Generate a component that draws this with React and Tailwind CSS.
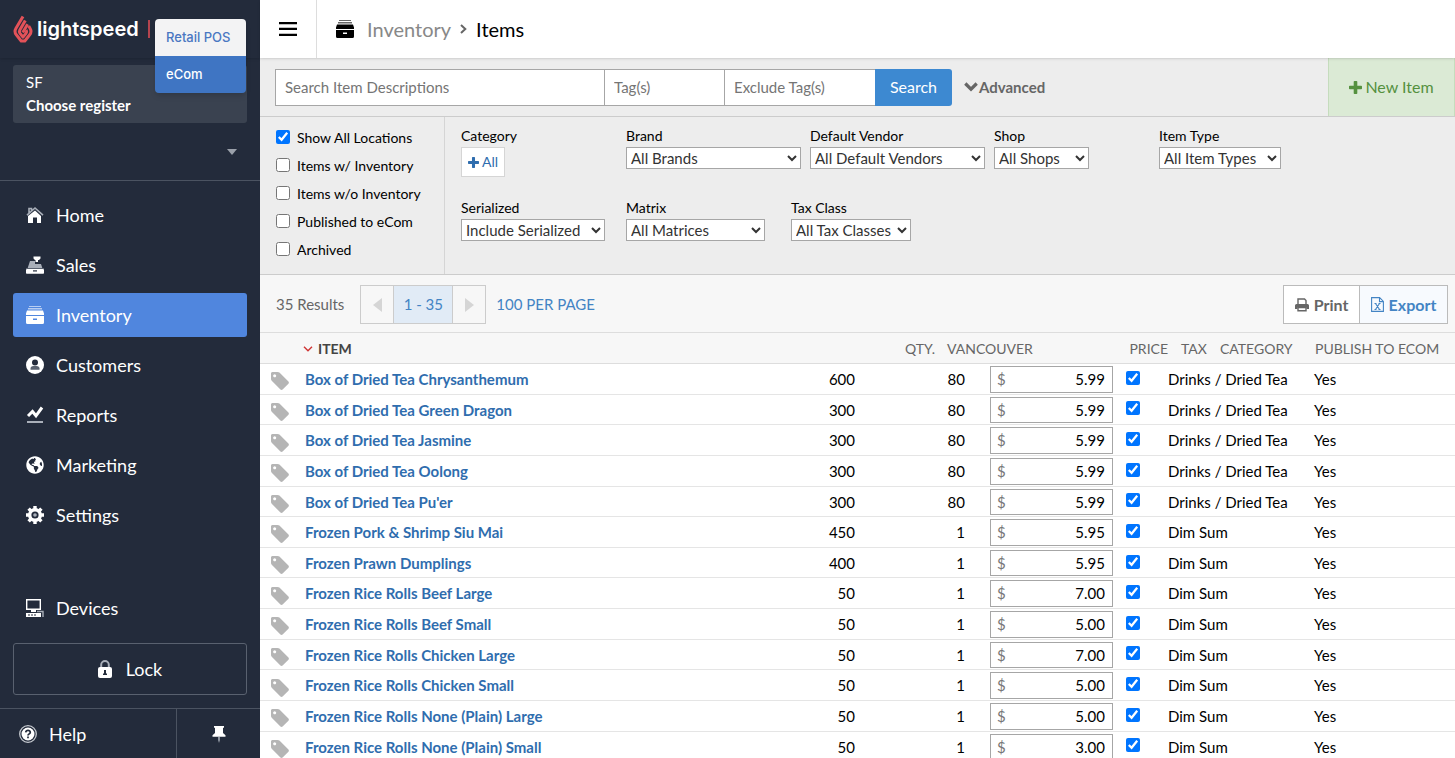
import { useId } from 'react';
import { FaGlobeAmericas } from 'react-icons/fa';

const ITEMS = [
  { name: 'Box of Dried Tea Chrysanthemum', qty: 600, local: 80, price: '5.99', category: 'Drinks / Dried Tea' },
  { name: 'Box of Dried Tea Green Dragon', qty: 300, local: 80, price: '5.99', category: 'Drinks / Dried Tea' },
  { name: 'Box of Dried Tea Jasmine', qty: 300, local: 80, price: '5.99', category: 'Drinks / Dried Tea' },
  { name: 'Box of Dried Tea Oolong', qty: 300, local: 80, price: '5.99', category: 'Drinks / Dried Tea' },
  { name: "Box of Dried Tea Pu'er", qty: 300, local: 80, price: '5.99', category: 'Drinks / Dried Tea' },
  { name: 'Frozen Pork & Shrimp Siu Mai', qty: 450, local: 1, price: '5.95', category: 'Dim Sum' },
  { name: 'Frozen Prawn Dumplings', qty: 400, local: 1, price: '5.95', category: 'Dim Sum' },
  { name: 'Frozen Rice Rolls Beef Large', qty: 50, local: 1, price: '7.00', category: 'Dim Sum' },
  { name: 'Frozen Rice Rolls Beef Small', qty: 50, local: 1, price: '5.00', category: 'Dim Sum' },
  { name: 'Frozen Rice Rolls Chicken Large', qty: 50, local: 1, price: '7.00', category: 'Dim Sum' },
  { name: 'Frozen Rice Rolls Chicken Small', qty: 50, local: 1, price: '5.00', category: 'Dim Sum' },
  { name: 'Frozen Rice Rolls None (Plain) Large', qty: 50, local: 1, price: '5.00', category: 'Dim Sum' },
  { name: 'Frozen Rice Rolls None (Plain) Small', qty: 50, local: 1, price: '3.00', category: 'Dim Sum' },
];

const CHECKS = [
  { label: 'Show All Locations', on: true },
  { label: 'Items w/ Inventory' },
  { label: 'Items w/o Inventory' },
  { label: 'Published to eCom' },
  { label: 'Archived' },
];

function Flame() {
  return (
    <svg viewBox="0 0 20 28" className="h-7 w-5" fill="none" stroke="#e35259" strokeWidth="3" strokeLinejoin="round">
      <path d="M10 1.500 3 13.300c-1.500 2.600-1.500 4.300.3 6.500L8.200 26h3.600l4.900-6.200c1.800-2.200 1.800-3.900.3-6.500L15.700 11" />
      <path d="M12.300 5.500 6.800 15c-.7 1.300-.7 2.200.2 3.400l3 3.700 3-3.700c.9-1.200.9-2.100.2-3.400" />
      <path d="m14.600 9.300-4.800 8.200" />
    </svg>
  );
}

function HomeIcon() {
  return (
    <svg viewBox="0 0 18 18" className="size-[18px]">
      <path d="M1 9.200 9 2l8 7.200M3 7V2.500h2.500V5" fill="none" stroke="#a9afb9" strokeWidth="1.600" />
      <path d="M9 4.500 15 10v7h-4v-5.500H7V17H2v-7z" fill="#fff" />
    </svg>
  );
}

function SalesIcon() {
  return (
    <svg viewBox="0 0 18 18" className="size-[18px]">
      <path d="M4 5h5v3h6l1.500 4.500h-15z" fill="#a9afb9" />
      <path d="M7.500 0.500h7v2l-1.500 1.500h-1V6h-2.500V4H9L7.500 2.500z" fill="#fff" />
      <path d="M1 12.500h16l1 1V17q0 .8-.8.8H.8Q0 17.800 0 17v-3.500z" fill="#fff" />
      <path d="M0 12h18v1H0z" fill="#59616f" />
      <path d="M7 14.300h4v1.200H7z" fill="#232b3b" />
    </svg>
  );
}

function DrawerIcon({ notch }) {
  return (
    <svg viewBox="0 0 18 18" className="size-[18px]" fill="currentColor">
      <path d="M3 0h12v1H3zM2 2h14v1.500H2z" opacity=".6" />
      <path d="M1 4.500h16l1 3V9H0V7.500zM0 10h18v6.500q0 1.500-1.500 1.500h-15Q0 18 0 16.500z" />
      <path d="M7 12.500h4V14H7z" fill={notch} />
    </svg>
  );
}

function CustomerIcon() {
  return (
    <svg viewBox="0 0 18 18" className="size-[18px]">
      <circle cx="9" cy="9" r="9" fill="#fff" />
      <circle cx="9" cy="6.500" r="3" fill="#232b3b" />
      <path d="M4.500 13.800v-1.300q0-2.500 3-2.500h3q3 0 3 2.500v1.300z" fill="#59616f" />
    </svg>
  );
}

function ReportIcon() {
  return (
    <svg viewBox="0 0 18 18" className="size-[18px]" fill="none">
      <path d="m2 10 4.500-4.500L10 9.800l6-8.300" stroke="#fff" strokeWidth="3" />
      <path d="M1 16h16" stroke="#a9afb9" strokeWidth="2" />
    </svg>
  );
}

function GearIcon() {
  return (
    <svg viewBox="0 0 18 18" className="size-[18px]" fill="none" stroke="#fff">
      <circle cx="9" cy="9" r="5.300" strokeWidth="3.400" />
      <path d="M9 0v3M9 15v3M0 9h3M15 9h3M2.600 2.600l2.200 2.200M13.200 13.200l2.200 2.200M15.400 2.600l-2.200 2.200M4.800 13.200l-2.200 2.200" strokeWidth="3.400" />
      <circle cx="9" cy="9" r="1.800" fill="#a9afb9" stroke="none" />
    </svg>
  );
}

function DeviceIcon() {
  return (
    <svg viewBox="0 0 18 18" className="size-[18px]" fill="none" stroke="#fff">
      <path d="M.700.700h13.600v9.600H.700z" strokeWidth="1.400" />
      <path d="M5 10h5v3H5z" fill="#fff" stroke="none" />
      <path d="M0 14h15v4H0z" fill="#fff" stroke="none" />
      <path d="M2 16h9" stroke="#232b3b" strokeDasharray="2 1" />
      <path d="M11 12.500h6V18" stroke="#a9afb9" strokeWidth="1.400" />
    </svg>
  );
}

function LockIcon() {
  return (
    <svg viewBox="0 0 14 18" className="h-[18px] w-[14px]">
      <path d="M3.200 8V4.800a3.800 3.800 0 0 1 7.600 0V8" fill="none" stroke="#a9afb9" strokeWidth="2" />
      <rect y="7" width="14" height="11" rx="2" fill="#fff" />
      <path d="M6 10h2v3.500h1V15H5v-1.500h1z" fill="#232b3b" />
    </svg>
  );
}

function HelpIcon() {
  return (
    <svg viewBox="0 0 18 18" className="size-[18px]" fill="none">
      <circle cx="9" cy="9" r="8.300" stroke="#c5c9cf" strokeWidth="1.300" />
      <circle cx="9" cy="9" r="6.500" fill="#fff" />
      <path d="M6.700 7.400Q7 5.300 9 5.300t2.300 1.900q0 1.200-1.300 1.800-1 .4-1 1.500M9 11.600v1.700" stroke="#232b3b" strokeWidth="1.700" />
    </svg>
  );
}

function PinIcon() {
  return (
    <svg viewBox="0 0 14 18" className="h-[18px] w-[14px]">
      <path d="M2 1h10v1.800h-1V8l2.500 2.200v1.600H.500v-1.600L3 8V2.800H2z" fill="#fff" />
      <path d="M6.200 12h1.600v3L7 18l-.8-3z" fill="#a9afb9" />
    </svg>
  );
}

function PlusIcon({ size }) {
  return (
    <svg viewBox="0 0 13 13" width={size} height={size} fill="currentColor">
      <path d="M5.500 0h2q.8 0 .8.800v3.900h3.900q.8 0 .8.800v2q0 .8-.8.800H8.300v3.900q0 .8-.8.800h-2q-.8 0-.8-.8V8.300H.8Q0 8.300 0 7.500v-2q0-.8.800-.8h3.900V.800q0-.8.800-.8z" />
    </svg>
  );
}

function TagIcon() {
  return (
    <svg viewBox="150 128 1493 1515" className="size-[18px]" fill="#b5b5b5">
      <path d="M576 448q0-53-37.500-90.500t-90.500-37.500-90.500 37.500-37.500 90.500 37.500 90.500 90.500 37.500 90.500-37.500 37.500-90.500zm1067 576q0 53-37 90l-491 492q-39 37-91 37-53 0-90-37l-715-716q-38-37-64.500-101t-26.500-117v-416q0-52 38-90t90-38h416q53 0 117 26.500t102 64.500l715 714q37 39 37 91z" />
    </svg>
  );
}

function PrintIcon() {
  return (
    <svg viewBox="0 0 14 14" className="size-[14px]" fill="none" stroke="currentColor">
      <path d="M3 6V1h6.500L11 2.500V6" strokeWidth="1.400" />
      <path d="M0 11V7.500Q0 6 1.500 6h11Q14 6 14 7.500V11h-2.500V9.500h-9V11z" fill="currentColor" stroke="none" />
      <path d="M3 9.500h8v3.300H3z" strokeWidth="1.400" />
    </svg>
  );
}

function SheetIcon() {
  return (
    <svg viewBox="0 0 13 15" className="h-[15px] w-[13px]" fill="none" stroke="currentColor" strokeWidth="1.100">
      <path d="M.6.600h8l3.800 3.800v10H.600zM8.500.600v4h3.900" />
      <path d="m4.500 6.500 4 6M8.500 6.500l-4 6M3.500 6.500h2M7.500 6.500h2M3.500 12.500h2M7.500 12.500h2" />
    </svg>
  );
}

const NAV = [
  { label: 'Home', icon: <HomeIcon /> },
  { label: 'Sales', icon: <SalesIcon /> },
  { label: 'Inventory', icon: <DrawerIcon notch="#5086de" />, active: true },
  { label: 'Customers', icon: <CustomerIcon /> },
  { label: 'Reports', icon: <ReportIcon /> },
  { label: 'Marketing', icon: <FaGlobeAmericas size={18} /> },
  { label: 'Settings', icon: <GearIcon /> },
];

function NavLink({ label, icon, active }) {
  return (
    <a
      href="#"
      className={`flex h-11 items-center gap-3 rounded-[3px] px-[13px] text-lg text-white ${active ? 'bg-[#5086de]' : ''}`}
    >
      {icon}
      {label}
    </a>
  );
}

function Sidebar() {
  return (
    <aside className="flex w-[260px] shrink-0 flex-col bg-[#232b3b] text-white">
      <div className="relative flex h-[58px] shrink-0 items-center px-[13px] shadow">
        <Flame />
        <span className="ml-1 font-['Inter'] text-xl font-semibold">lightspeed</span>
        <span className="ml-[9px] h-[18px] w-0.5 bg-[#b5444e]" />
        <div className="absolute top-[19px] left-[155px] z-10 flex w-[91px] flex-col overflow-hidden rounded font-['Inter'] text-[13px] font-medium shadow-md">
          <a href="#" className="flex h-[37px] items-center bg-[#f3f3f4] px-[11px] text-[#4a77c2]">Retail POS</a>
          <a href="#" className="flex h-[37px] items-center bg-[#3f75c3] px-[11px] text-white">eCom</a>
        </div>
      </div>

      <button className="mx-[13px] mt-[7px] h-[58px] rounded-[3px] bg-[#3a4250] px-[13px] text-left text-[15px] leading-[23px]">
        <span className="block">SF</span>
        <span className="block font-bold">Choose register</span>
      </button>
      <div className="flex h-[58px] shrink-0 items-center justify-end border-b border-[#4b5361] px-[23px]">
        <svg viewBox="0 0 10 6" className="h-1.5 w-2.5" fill="#9aa0aa"><path d="M0 0h10L5 6z" /></svg>
      </div>

      <nav className="mx-[13px] mt-3 flex flex-col gap-[6px]">
        {NAV.map(n => <NavLink key={n.label} {...n} />)}
      </nav>

      <div className="mx-[13px] mt-auto mb-[13px] flex flex-col gap-[13px]">
        <NavLink label="Devices" icon={<DeviceIcon />} />
        <button className="flex h-[52px] items-center justify-center gap-[14px] rounded-[3px] border border-[#59616f] text-lg">
          <LockIcon />
          Lock
        </button>
      </div>
      <div className="flex h-[50px] shrink-0 border-t border-[#4b5361] text-lg">
        <a href="#" className="flex flex-1 items-center gap-3 border-r border-[#4b5361] px-[19px]">
          <HelpIcon />
          Help
        </a>
        <button aria-label="Pin menu" className="flex w-[83px] items-center justify-center"><PinIcon /></button>
      </div>
    </aside>
  );
}

function SelectField({ label, value, width }) {
  const id = useId();
  return (
    <div className="min-w-[165px] pr-[9px]">
      <label htmlFor={id} className="block text-sm leading-[22px] text-black">{label}</label>
      <select id={id} className={`block h-[22px] border border-[#a6a6a6] bg-white text-[15px] leading-5 text-[#333] ${width}`}>
        <option>{value}</option>
      </select>
    </div>
  );
}

function Filters() {
  return (
    <section className="flex border-b border-[#ccc] bg-[#ededed]">
      <div className="flex w-[185px] shrink-0 flex-col border-r border-[#d5d5d5] px-4 pt-[7px] pb-[10px]">
        {CHECKS.map(c => (
          <label key={c.label} className="flex h-7 items-center gap-[7px] text-sm whitespace-nowrap text-black">
            <input type="checkbox" defaultChecked={c.on} className="mb-[3px] size-[14px]" />
            {c.label}
          </label>
        ))}
      </div>
      <div className="flex flex-1 flex-wrap content-start gap-y-5 pt-2 pl-4">
        <div className="min-w-[165px]">
          <p className="text-sm leading-[22px] text-black">Category</p>
          <button className="flex h-[30px] items-center gap-[3px] border border-[#d5d5d5] bg-white px-[6px] text-sm text-[#2f6dae]">
            <PlusIcon size={11} />
            All
          </button>
        </div>
        <SelectField label="Brand" value="All Brands" width="w-[175px]" />
        <SelectField label="Default Vendor" value="All Default Vendors" width="w-[175px]" />
        <SelectField label="Shop" value="All Shops" width="w-[95px]" />
        <SelectField label="Item Type" value="All Item Types" width="w-[122px]" />
        <SelectField label="Serialized" value="Include Serialized" width="w-[144px]" />
        <SelectField label="Matrix" value="All Matrices" width="w-[139px]" />
        <SelectField label="Tax Class" value="All Tax Classes" width="w-[120px]" />
      </div>
    </section>
  );
}

function SearchBar() {
  const input = 'h-[37px] border border-[#a6a6a6] bg-white px-[9px] text-[15px] text-[#333] placeholder:text-[#757575]';
  return (
    <form className="flex h-[59px] shrink-0 items-center border-b border-[#ccc] bg-[#ededed] pl-[15px]">
      <input aria-label="Search Item Descriptions" placeholder="Search Item Descriptions" className={`w-[330px] ${input}`} />
      <input aria-label="Tags" placeholder="Tag(s)" className={`w-[120px] border-l-0 ${input}`} />
      <input aria-label="Exclude tags" placeholder="Exclude Tag(s)" className={`w-[150px] border-x-0 ${input}`} />
      <button type="button" className="h-[37px] w-[77px] rounded-r-[3px] bg-[#3d89d1] text-base text-white">Search</button>
      <button type="button" className="ml-3 flex items-center gap-px text-[15px] font-bold text-[#666]">
        <svg viewBox="0 0 14 10" className="h-2.5 w-3.5" fill="none" stroke="currentColor" strokeWidth="3.200"><path d="m1.300 1.500 5.700 5.700 5.700-5.700" /></svg>
        Advanced
      </button>
      <button type="button" className="ml-auto flex h-full w-[127px] items-center justify-center gap-[3px] border-x border-[#c5dcbd] bg-[#dbead5] text-base text-[#55913f]">
        <PlusIcon size={13} />
        New Item
      </button>
    </form>
  );
}

function ResultsBar() {
  return (
    <div className="flex h-[57px] shrink-0 items-center bg-[#f7f7f7] pt-0.5 pr-[7px] pl-4 text-[15px]">
      <span className="text-[#666]">35 Results</span>
      <div className="ml-4 flex h-[39px] border border-[#ccc]">
        <button aria-label="Previous page" className="flex w-8 items-center justify-center">
          <svg viewBox="0 0 9 14" className="h-3.5 w-[9px]" fill="#d5d5d5"><path d="M9 0v14L0 7z" /></svg>
        </button>
        <button className="w-[60px] border-x border-[#ccc] bg-[#e1ebf6] text-[#4384c4]">1 - 35</button>
        <button aria-label="Next page" className="flex w-8 items-center justify-center">
          <svg viewBox="0 0 9 14" className="h-3.5 w-[9px]" fill="#d5d5d5"><path d="M0 0v14l9-7z" /></svg>
        </button>
      </div>
      <a href="#" className="ml-[10px] text-[#4384c4]">100 PER PAGE</a>
      <div className="ml-auto flex h-[39px] border border-[#bbb] text-base font-bold">
        <button className="flex w-[75px] items-center justify-center gap-[5px] bg-white text-[#666]"><PrintIcon />Print</button>
        <button className="flex w-[88px] items-center justify-center gap-[5px] border-l border-[#bbb] bg-[#f7fafe] text-[#4384c4]">
          <SheetIcon />
          Export
        </button>
      </div>
    </div>
  );
}

function ItemTable() {
  return (
    <table className="block text-[15px] text-black">
      <thead className="block">
        <tr className="grid h-8 grid-cols-[1fr_60px_100px_134px_39px_95px_140px] items-center border-y border-[#ddd] bg-[#f7f7f7] pt-px text-sm text-[#666] *:font-normal">
          <th className="pl-[43px] text-left">
            <button className="flex items-center gap-[5px] font-bold text-[#444]">
              <svg viewBox="0 0 10 6" className="h-1.5 w-2.5" fill="none" stroke="#cf3434" strokeWidth="1.400"><path d="m1 .700 4 4 4-4" /></svg>
              ITEM
            </button>
          </th>
          <th className="pr-3 text-right">QTY.</th>
          <th className="text-left">VANCOUVER</th>
          <th className="pr-[13px] text-right">PRICE</th>
          <th className="text-left">TAX</th>
          <th className="text-left">CATEGORY</th>
          <th className="text-left">PUBLISH TO ECOM</th>
        </tr>
      </thead>
      <tbody className="block">
        {ITEMS.map(item => (
          <tr key={item.name} className="grid grid-cols-[45px_1fr_100px_110px_136px_42px_146px_141px] items-center border-b border-[#e5e5e5] pt-px leading-snug">
            <td className="pt-1 pl-[11px]"><TagIcon /></td>
            <td><a href="#" className="font-bold text-[#2f6dae]">{item.name}</a></td>
            <td className="pr-[25px] text-right">{item.qty}</td>
            <td className="pr-[25px] text-right">{item.local}</td>
            <td className="py-px">
              <label className="flex w-[123px] items-center border border-[#a6a6a6] bg-white py-[2px] pr-[7px] pl-[6px]">
                <span className="text-[#777]">$</span>
                <input aria-label={`Price of ${item.name}`} defaultValue={item.price} className="w-full min-w-0 text-right" />
              </label>
            </td>
            <td><input type="checkbox" aria-label={`Tax ${item.name}`} defaultChecked className="mb-[3px] block size-[14px]" /></td>
            <td>{item.category}</td>
            <td>Yes</td>
          </tr>
        ))}
      </tbody>
    </table>
  );
}

export default function App() {
  return (
    <div className="flex h-screen overflow-hidden bg-white font-['Lato',sans-serif]">
      <Sidebar />
      <main className="flex min-w-0 flex-1 flex-col">
        <header className="relative z-10 flex h-[58px] shrink-0 items-center bg-white shadow">
          <button aria-label="Toggle menu" className="flex h-full w-[57px] items-center justify-center border-r border-[#ddd]">
            <svg viewBox="0 0 18 14" className="h-3.5 w-[18px]"><path d="M0 0h18v2.300H0zM0 5.800h18v2.300H0zM0 11.700h18V14H0z" /></svg>
          </button>
          <nav className="flex items-center pl-[19px] text-xl">
            <DrawerIcon notch="#fff" />
            <a href="#" className="ml-[13px] text-[#888]">Inventory</a>
            <svg viewBox="0 0 7 10" className="mx-[9px] h-2.5 w-[7px]" fill="none" stroke="#666" strokeWidth="2"><path d="m1 1 4.300 4L1 9" /></svg>
            <span className="text-black">Items</span>
          </nav>
        </header>
        <SearchBar />
        <Filters />
        <ResultsBar />
        <ItemTable />
      </main>
    </div>
  );
}
